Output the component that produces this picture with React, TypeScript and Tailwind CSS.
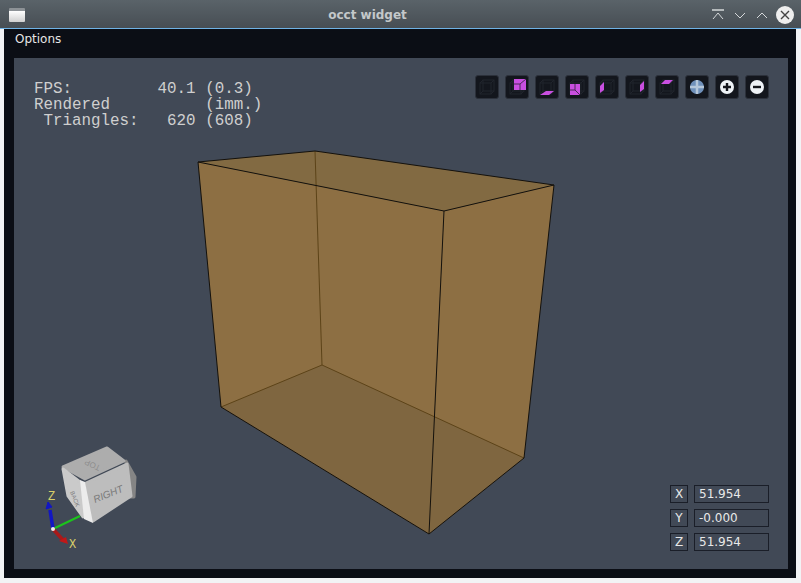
const tools = ["none", "back", "bottom", "front", "left", "right", "top"];

const CubeIcon = ({ face }: { face: string }) => {
  return (
    <svg width="20" height="20" viewBox="0 0 20 20">
      <g fill="none" stroke="#20242c" strokeWidth="1">
        <rect x="3" y="6" width="11" height="11" />
        <rect x="6" y="3" width="11" height="11" />
        <path d="M3 6 6 3M14 6 17 3M3 17 6 14M14 17 17 14" />
      </g>
      {face === "back" && <path d="M7 2h12v11H7z" fill="#c94fe0" />}
      {face === "back" && <path d="M13 7 19 2M13 7v6M13 7H7" stroke="#4a2a58" fill="none" />}
      {face === "bottom" && <path d="M3 18 9 14h8l-5 4z" fill="#c94fe0" />}
      {face === "front" && <path d="M3 7h10v11H3z" fill="#c94fe0" />}
      {face === "front" && <path d="M8 7v6M3 13h5M8 13l5 5" stroke="#4a2a58" fill="none" />}
      {face === "left" && <path d="M3 9 7 5v8l-4 3z" fill="#c94fe0" />}
      {face === "right" && <path d="M13 8 17 4v8l-4 3z" fill="#c94fe0" />}
      {face === "top" && <path d="M4 7 8 3h8l-4 4z" fill="#c94fe0" />}
    </svg>
  );
};

const ToolButton = ({ children }: { children: React.ReactNode }) => {
  return (
    <div className="w-6 h-6 flex items-center justify-center rounded-[3px] border border-[#2c313b] bg-[#13161d]">
      {children}
    </div>
  );
};

const CoordRow = ({ label, value }: { label: string; value: string }) => {
  return (
    <div className="flex gap-[6px]">
      <div className="w-[18px] h-[18px] border border-[#1a1e28] text-[12px] leading-[16px] text-center text-[#e8e8e8]">
        {label}
      </div>
      <div className="w-[75px] h-[18px] border border-[#1a1e28] text-[12px] leading-[16px] pl-1 text-[#e8e8e8]">
        {value}
      </div>
    </div>
  );
};

const App = () => {
  return (
    <div className="w-[801px] h-[583px] flex flex-col bg-[#f2f3f5] overflow-hidden font-['DejaVu_Sans',sans-serif]">
      <div className="h-[28px] shrink-0 flex items-center pt-[2px] pl-[9px] pr-2 bg-gradient-to-b from-[#5a6369] to-[#474e54]">
        <div className="w-[16px] h-[14px] rounded-[1px] border-t-[3px] border-[#8d9296] bg-gradient-to-b from-white to-[#d0d0d0]" />
        <div className="flex-1 text-center text-[12px] font-bold text-[#c4c8ca]">occt widget</div>
        <div className="flex items-center gap-[6px] text-[#d5d8da]">
          <svg width="16" height="16" viewBox="0 0 16 16" fill="none" stroke="currentColor">
            <path d="M2 3h12" strokeWidth="1.5" />
            <path d="M3 12 8 6l5 6" />
          </svg>
          <svg width="16" height="16" viewBox="0 0 16 16" fill="none" stroke="currentColor">
            <path d="M3 6l5 5 5-5" />
          </svg>
          <svg width="16" height="16" viewBox="0 0 16 16" fill="none" stroke="currentColor">
            <path d="M3 11l5-5 5 5" />
          </svg>
          <div className="w-[18px] h-[18px] rounded-full bg-[#eeeeee] flex items-center justify-center -mr-[1px]">
            <svg width="12" height="12" viewBox="0 0 12 12" stroke="#444" strokeWidth="1.4">
              <path d="M2 2l8 8M10 2l-8 8" />
            </svg>
          </div>
        </div>
      </div>
      <div className="h-[1px] shrink-0 bg-[#6fb3e6]" />
      <div className="flex-1 flex flex-col ml-1 mr-[5px] mb-[5px] bg-[#0b0e15] pl-[10px] pr-[8px] pb-[9px]">
        <div className="h-[29px] shrink-0 pt-[1px] pl-[1px] text-[12px] text-[#e6e6e6]">Options</div>
        <div className="relative flex-1 bg-[#414956] overflow-hidden">
          <svg className="absolute left-[-14px] top-[-58px]" width="801" height="583" viewBox="0 0 801 583">
            <path d="M198 162 444 211 429 534 221 407z" fill="#8d6f43" />
            <path d="M444 211 554 185 524 458 429 534z" fill="#8d6f43" />
            <path d="M198 162 315 151 554 185 444 211z" fill="#826a42" />
            <path d="M221 407 322 365 524 458 429 534z" fill="#7f6640" />
            <g stroke="#5c4318" strokeWidth="1" fill="none">
              <path d="M315 151 322 365 221 407M322 365 524 458" />
            </g>
            <g stroke="#14110c" strokeWidth="1" fill="none">
              <path d="M198 162 315 151 554 185 444 211z" />
              <path d="M198 162 221 407 429 534 444 211" />
              <path d="M554 185 524 458 429 534" />
            </g>

            <g strokeLinejoin="round" strokeWidth="3">
              <path d="M126 461 135 477 134 497 128 497z" fill="#858585" stroke="#858585" />
              <path d="M63 467 107 448 124 461 85 479z" fill="#adadad" stroke="#adadad" />
              <path d="M63 469 80 482 83 517 68 496z" fill="#cacaca" stroke="#cacaca" />
              <path d="M86 483 127 464 131 496 93 521z" fill="#bdbdbd" stroke="#bdbdbd" />
            </g>
            <path d="M80 480 85 482 93 523 84 519z" fill="#ececec" />
            <text
              transform="translate(95 503) rotate(-22)"
              fontFamily="Liberation Sans, sans-serif"
              fontStyle="italic"
              fontSize="10"
              fill="#7a7a7a"
            >
              RIGHT
            </text>
            <text
              transform="translate(70 492) rotate(68)"
              fontFamily="Liberation Sans, sans-serif"
              fontSize="6"
              fill="#7a7a7a"
            >
              BACK
            </text>
            <text
              transform="translate(101 466) rotate(205)"
              fontFamily="Liberation Sans, sans-serif"
              fontSize="8"
              fill="#8e8e8e"
            >
              TOP
            </text>

            <path d="M53 529 80 516" stroke="#1cc41c" strokeWidth="2" />
            <path d="M53 529 50 510" stroke="#1216c4" strokeWidth="3.5" />
            <path d="M46 509 48 502 52 507z" fill="#1216c4" stroke="#1216c4" />
            <path d="M53 529 63 540" stroke="#a81a1a" strokeWidth="3.5" />
            <path d="M59 541 66 537 68 544z" fill="#c01818" />
            <circle cx="53" cy="529" r="2" fill="#eee" />
            <text x="48" y="500" fontFamily="Liberation Mono, monospace" fontSize="12" fill="#d8cf6a">
              Z
            </text>
            <text x="69" y="548" fontFamily="Liberation Mono, monospace" fontSize="12" fill="#d8cf6a">
              X
            </text>
          </svg>
          <pre className="absolute left-[20px] top-[23px] font-['Liberation_Mono',monospace] text-[15.85px] leading-[16px] text-[#cfcfcf]">
            {"FPS:         40.1 (0.3)\nRendered          (imm.)\n Triangles:   620 (608)"}
          </pre>
          <div className="absolute top-[17px] right-[19px] flex gap-[6px]">
            {tools.map((face) => (
              <ToolButton key={face}>
                <CubeIcon face={face} />
              </ToolButton>
            ))}
            <ToolButton>
              <svg width="18" height="18" viewBox="0 0 18 18">
                <circle cx="9" cy="9" r="7" fill="#6f90ba" />
                <path d="M9 2v14M2 9h14" stroke="#b4c6da" strokeWidth="2.5" />
              </svg>
            </ToolButton>
            <ToolButton>
              <svg width="18" height="18" viewBox="0 0 18 18">
                <circle cx="9" cy="9" r="7" fill="#eef2f6" />
                <path d="M9 5v8M5 9h8" stroke="#14161c" strokeWidth="2.4" />
              </svg>
            </ToolButton>
            <ToolButton>
              <svg width="18" height="18" viewBox="0 0 18 18">
                <circle cx="9" cy="9" r="7" fill="#eef2f6" />
                <path d="M5 9h8" stroke="#14161c" strokeWidth="2.4" />
              </svg>
            </ToolButton>
          </div>
          <div className="absolute right-[19px] bottom-[18px] flex flex-col gap-[6px]">
            <CoordRow label="X" value="51.954" />
            <CoordRow label="Y" value="-0.000" />
            <CoordRow label="Z" value="51.954" />
          </div>
        </div>
      </div>
    </div>
  );
};

export default App;
